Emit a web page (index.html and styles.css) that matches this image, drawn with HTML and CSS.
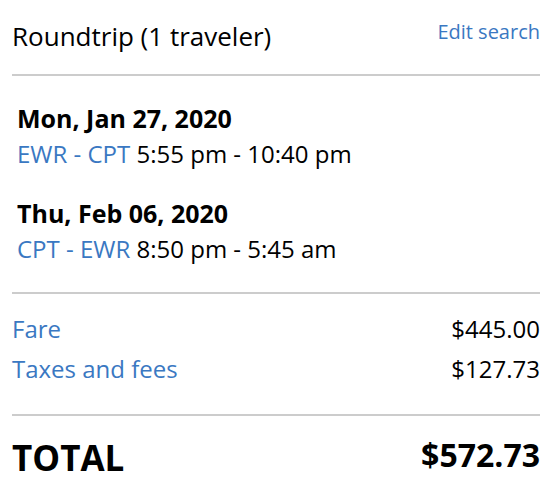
FILE: index.html
```html
<!DOCTYPE html>
<html lang="en">
<head>
<meta charset="utf-8">
<title>Trip summary</title>
<link rel="stylesheet" href="styles.css">
</head>
<body>
<div class="summary">
  <div class="header">
    <div class="title">Roundtrip (1 traveler)</div>
    <a class="edit" href="#">Edit search</a>
  </div>
  <div class="legs">
    <div class="leg">
      <div class="date">Mon, Jan 27, 2020</div>
      <div class="route"><span class="airports">EWR - CPT</span> 5:55 pm - 10:40 pm</div>
    </div>
    <div class="leg">
      <div class="date">Thu, Feb 06, 2020</div>
      <div class="route"><span class="airports">CPT - EWR</span> 8:50 pm - 5:45 am</div>
    </div>
  </div>
  <div class="charges">
    <div class="charge"><span class="label">Fare</span><span class="amount">$445.00</span></div>
    <div class="charge"><span class="label">Taxes and fees</span><span class="amount">$127.73</span></div>
  </div>
  <div class="total">
    <div class="total-label">TOTAL</div>
    <div class="total-amount">$572.73</div>
  </div>
</div>
</body>
</html>
```
FILE: styles.css
```css
html, body {
  margin: 0;
  padding: 0;
  background: #fff;
}
body {
  font-family: "Open Sans", "Liberation Sans", sans-serif;
  color: #000;
}
.summary {
  padding: 20px 14px 0 12px;
}
.header {
  display: flex;
  justify-content: space-between;
  align-items: flex-start;
  padding-bottom: 22px;
  border-bottom: 2px solid #cccccc;
}
.title {
  font-size: 26px;
  line-height: 32px;
}
.edit {
  font-size: 20px;
  line-height: 24px;
  color: #3a78c2;
  text-decoration: none;
}
.legs {
  padding: 26px 0 28px 5px;
  border-bottom: 2px solid #cccccc;
  display: flex;
  flex-direction: column;
  gap: 28px;
}
.date {
  font-size: 25px;
  font-weight: 700;
  line-height: 32px;
}
.route {
  font-size: 24px;
  line-height: 30px;
  margin-top: 5px;
}
.airports {
  color: #3a78c2;
}
.charges {
  padding: 19px 0 29px;
  border-bottom: 2px solid #cccccc;
  display: flex;
  flex-direction: column;
  gap: 8px;
}
.charge {
  display: flex;
  justify-content: space-between;
  font-size: 24px;
  line-height: 32px;
}
.label {
  color: #3a78c2;
}
.total {
  display: flex;
  justify-content: space-between;
  align-items: flex-start;
  padding-top: 20px;
  font-weight: 700;
}
.total-label {
  font-size: 35px;
  line-height: 44px;
}
.total-amount {
  font-size: 32px;
  line-height: 38px;
}
```
